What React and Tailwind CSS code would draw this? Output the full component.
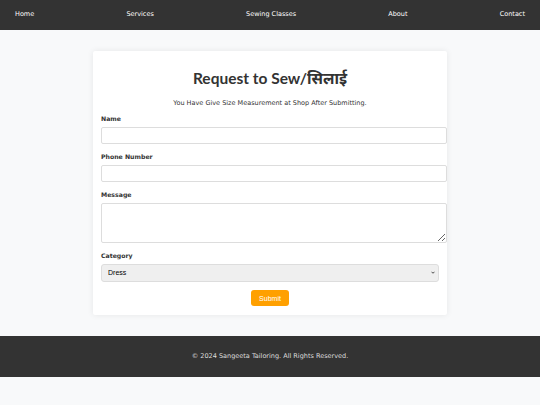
export default function App() {
  const font = { fontFamily: '"DejaVu Sans", "Noto Sans", sans-serif' };
  const arial = { fontFamily: '"Liberation Sans", Arial, sans-serif' };
  return (
    <div className="min-h-[405px] bg-[#f8f9fa] text-[#333]" style={font}>
      <nav className="h-[30px] bg-[#333] px-[15px] flex items-center justify-between text-[6.5px] text-white">
        <a>Home</a>
        <a>Services</a>
        <a>Sewing Classes</a>
        <a>About</a>
        <a>Contact</a>
      </nav>

      <div className="w-[354px] mx-auto mt-[21px] bg-white px-2 pt-[14px] pb-[9px] shadow-[0_0_6px_rgba(0,0,0,0.08)] rounded-[2px]">
        <h1
          className="text-center text-[15.5px] font-bold leading-[27px] text-[#333]"
          style={{ fontFamily: 'Lato, "Noto Sans", sans-serif' }}
        >
          Request to Sew/सिलाई
        </h1>
        <p className="text-center text-[6.5px] mt-[6px] leading-[10px]">You Have Give Size Measurement at Shop After Submitting.</p>

        <form className="mt-[6px]">
          <label className="block text-[6.2px] font-bold leading-[10px]">Name</label>
          <input className="block mt-[3px] w-[346px] h-[17px] border border-[#ddd] rounded-[2px] bg-white" />

          <label className="block mt-[8px] text-[6.2px] font-bold leading-[10px]">Phone Number</label>
          <input className="block mt-[3px] w-[346px] h-[17px] border border-[#ddd] rounded-[2px] bg-white" />

          <label className="block mt-[8px] text-[6.2px] font-bold leading-[10px]">Message</label>
          <textarea className="block mt-[3px] w-[346px] h-[40px] border border-[#ddd] rounded-[2px] bg-white" />

          <label className="block mt-[8px] text-[6.2px] font-bold leading-[10px]">Category</label>
          <div className="relative mt-[3px]">
            <select
              className="block w-full h-[18px] appearance-none border border-[#ddd] rounded-[3px] bg-[#efefef] text-[7px] pl-[6px] text-black"
              style={arial}
            >
              <option>Dress</option>
              <option>Blouse</option>
              <option>Suit</option>
            </select>
            <svg className="absolute right-[4px] top-[7px] w-[4px] h-[3px] pointer-events-none" viewBox="0 0 8 5">
              <path d="M1 1l3 3 3-3" fill="none" stroke="#222" strokeWidth="1.6" />
            </svg>
          </div>

          <div className="flex justify-center mt-[8px]">
            <button type="button" className="h-[16px] w-[38px] bg-[#ffa000] text-white text-[7px] rounded-[3px] leading-none" style={arial}>
              Submit
            </button>
          </div>
        </form>
      </div>

      <footer className="mt-[21px] h-[41px] bg-[#333] flex items-center justify-center text-[6.5px] text-[#ddd]">
        © 2024 Sangeeta Tailoring. All Rights Reserved.
      </footer>
    </div>
  );
}
